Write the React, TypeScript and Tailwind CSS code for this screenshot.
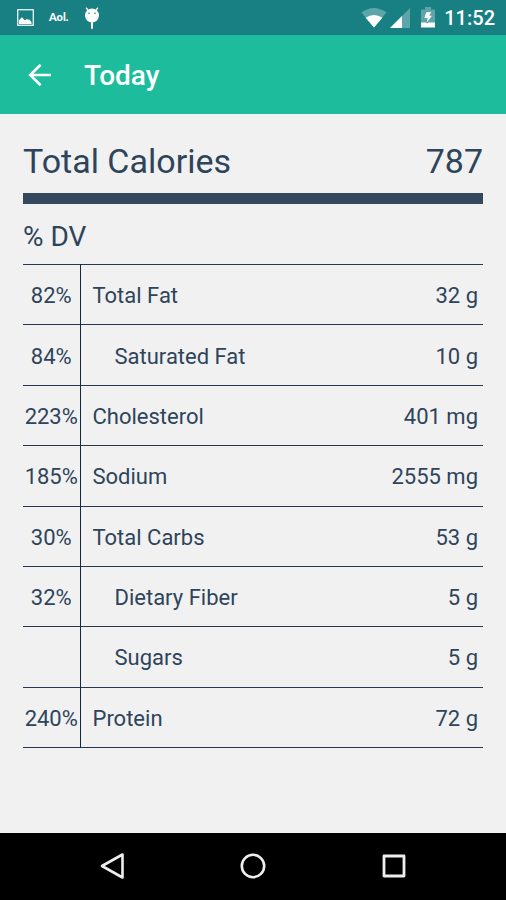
type Nutrient = {
  name: string;
  amount: string;
  dailyValue?: string;
  nested?: boolean;
};

const nutrients: Nutrient[] = [
  { name: "Total Fat", amount: "32 g", dailyValue: "82%" },
  { name: "Saturated Fat", amount: "10 g", dailyValue: "84%", nested: true },
  { name: "Cholesterol", amount: "401 mg", dailyValue: "223%" },
  { name: "Sodium", amount: "2555 mg", dailyValue: "185%" },
  { name: "Total Carbs", amount: "53 g", dailyValue: "30%" },
  { name: "Dietary Fiber", amount: "5 g", dailyValue: "32%", nested: true },
  { name: "Sugars", amount: "5 g", nested: true },
  { name: "Protein", amount: "72 g", dailyValue: "240%" },
];

function PictureIcon() {
  return (
    <svg width="17" height="17" viewBox="0 0 17 17" aria-hidden="true">
      <rect x="0.75" y="0.75" width="15.5" height="15.5" fill="none" stroke="#fff" strokeWidth="1.2" />
      <path d="M2 15V11.5L3.5 9.5L5 8.3L7 10.5L8 11.3L10 10L11 10.8L12 10.3L14.5 13V15Z" fill="#fff" />
    </svg>
  );
}

function AndroidIcon() {
  return (
    <svg width="16" height="22" viewBox="0 0 16 22" aria-hidden="true">
      <path d="M2 0.8L4.2 3.2M14 0.8L11.8 3.2" stroke="#fff" strokeWidth="1.3" />
      <circle cx="8" cy="8.5" r="7" fill="#fff" />
      <circle cx="5" cy="6.2" r="0.8" fill="#187f83" />
      <circle cx="11" cy="6.2" r="0.8" fill="#187f83" />
      <path d="M8 16V21" stroke="#fff" strokeWidth="2" strokeLinecap="round" />
    </svg>
  );
}

function WifiIcon() {
  return (
    <svg width="26" height="20" viewBox="0 0 26 20" aria-hidden="true">
      <path d="M13 19.5L0.5 4.5Q13 -4.5 25.5 4.5Z" fill="#fff" fillOpacity="0.3" />
      <path d="M13 19.5L4.6 9.8Q13 4.4 21.4 9.8Z" fill="#fff" />
    </svg>
  );
}

function SignalIcon() {
  return (
    <svg width="20" height="20" viewBox="0 0 20 20" aria-hidden="true">
      <path d="M0 20L20 0V20Z" fill="#fff" fillOpacity="0.3" />
      <path d="M0 20L12 8V20Z" fill="#fff" />
    </svg>
  );
}

function BatteryIcon() {
  return (
    <svg width="14" height="21" viewBox="0 0 14 21" aria-hidden="true">
      <path d="M0 2.5H4V0H10V2.5H14V16H0Z" fill="#fff" fillOpacity="0.3" />
      <path d="M0 15.5H5L6 16.5L7.5 15.5H14V20.5H0Z" fill="#fff" />
      <path d="M5.2 5.3L10.2 5L8.3 8.7H11L5.8 15.5L6.6 11H3.4Z" fill="#fff" />
    </svg>
  );
}

function StatusBar() {
  return (
    <div className="flex h-[35px] items-center bg-[#187f83] pl-[17px] pr-[11px] text-white">
      <PictureIcon />
      <span className="ml-[15px] pb-[2px] font-[Lato,sans-serif] text-[11px] font-black leading-4">Aol.</span>
      <span className="ml-4">
        <AndroidIcon />
      </span>
      <div className="ml-auto flex items-center">
        <WifiIcon />
        <span className="ml-[3px]">
          <SignalIcon />
        </span>
        <span className="ml-[11px]">
          <BatteryIcon />
        </span>
        <span className="ml-[9px] text-[20px] font-medium leading-6">11:52</span>
      </div>
    </div>
  );
}

export default function App() {
  return (
    <div className="flex min-h-screen flex-col bg-[#f1f1f1] font-[Roboto,sans-serif] text-[#2e445a]">
      <StatusBar />
      <header className="flex h-[79px] items-center bg-[#1cbc9c] pl-7 text-white">
        <button type="button" aria-label="Back" className="cursor-pointer">
          <svg width="24" height="24" viewBox="0 0 24 24" fill="none" stroke="#fff" strokeWidth="2.6" aria-hidden="true">
            <path d="M12.6 1.8L2.2 12L12.6 22.2M2 12H23" />
          </svg>
        </button>
        <h1 className="ml-8 pt-[2px] text-[28px] font-medium leading-8">Today</h1>
      </header>

      <main className="flex-1 px-[23px] pt-[27px]">
        <div className="flex items-center justify-between border-b-[11px] border-[#34495e] pb-3 text-[34px] leading-10">
          <h2>Total Calories</h2>
          <span>787</span>
        </div>
        <h3 className="pb-[9px] pt-[15px] text-[28px] leading-9">% DV</h3>
        <table className="h-[484px] w-full table-fixed border-collapse border-y border-[#24394f] text-[22px] leading-7">
          <colgroup>
            <col className="w-[57px]" />
            <col />
            <col className="w-32" />
          </colgroup>
          <tbody>
            {nutrients.map((n) => (
              <tr key={n.name} className="border-b border-[#24394f]">
                <td className="whitespace-nowrap border-r border-[#14283f] px-0 pb-0 pt-[3px] text-center">
                  {n.dailyValue}
                </td>
                <th
                  scope="row"
                  className={
                    n.nested
                      ? "pb-0 pl-[34px] pt-[3px] text-left font-normal"
                      : "pb-0 pl-3 pt-[3px] text-left font-normal"
                  }
                >
                  {n.name}
                </th>
                <td className="whitespace-nowrap pb-0 pr-[5px] pt-[3px] text-right">{n.amount}</td>
              </tr>
            ))}
          </tbody>
        </table>
      </main>

      <nav aria-label="System" className="flex h-[67px] justify-center bg-black pb-[2px]">
        <div className="grid w-5/6 grid-cols-3">
          <button type="button" aria-label="Back" className="flex cursor-pointer items-center justify-center">
            <svg width="26" height="28" viewBox="0 0 26 28" fill="none" stroke="#eee" strokeWidth="2.6" strokeLinejoin="round" aria-hidden="true">
              <path d="M23.5 2.5V25.5L3 14Z" />
            </svg>
          </button>
          <button type="button" aria-label="Home" className="flex cursor-pointer items-center justify-center">
            <svg width="26" height="26" viewBox="0 0 26 26" fill="none" stroke="#eee" strokeWidth="2.6" aria-hidden="true">
              <circle cx="13" cy="13" r="11.2" />
            </svg>
          </button>
          <button type="button" aria-label="Overview" className="flex cursor-pointer items-center justify-center">
            <svg width="24" height="24" viewBox="0 0 24 24" fill="none" stroke="#eee" strokeWidth="2.8" strokeLinejoin="round" aria-hidden="true">
              <rect x="2" y="2" width="20" height="20" />
            </svg>
          </button>
        </div>
      </nav>
    </div>
  );
}
